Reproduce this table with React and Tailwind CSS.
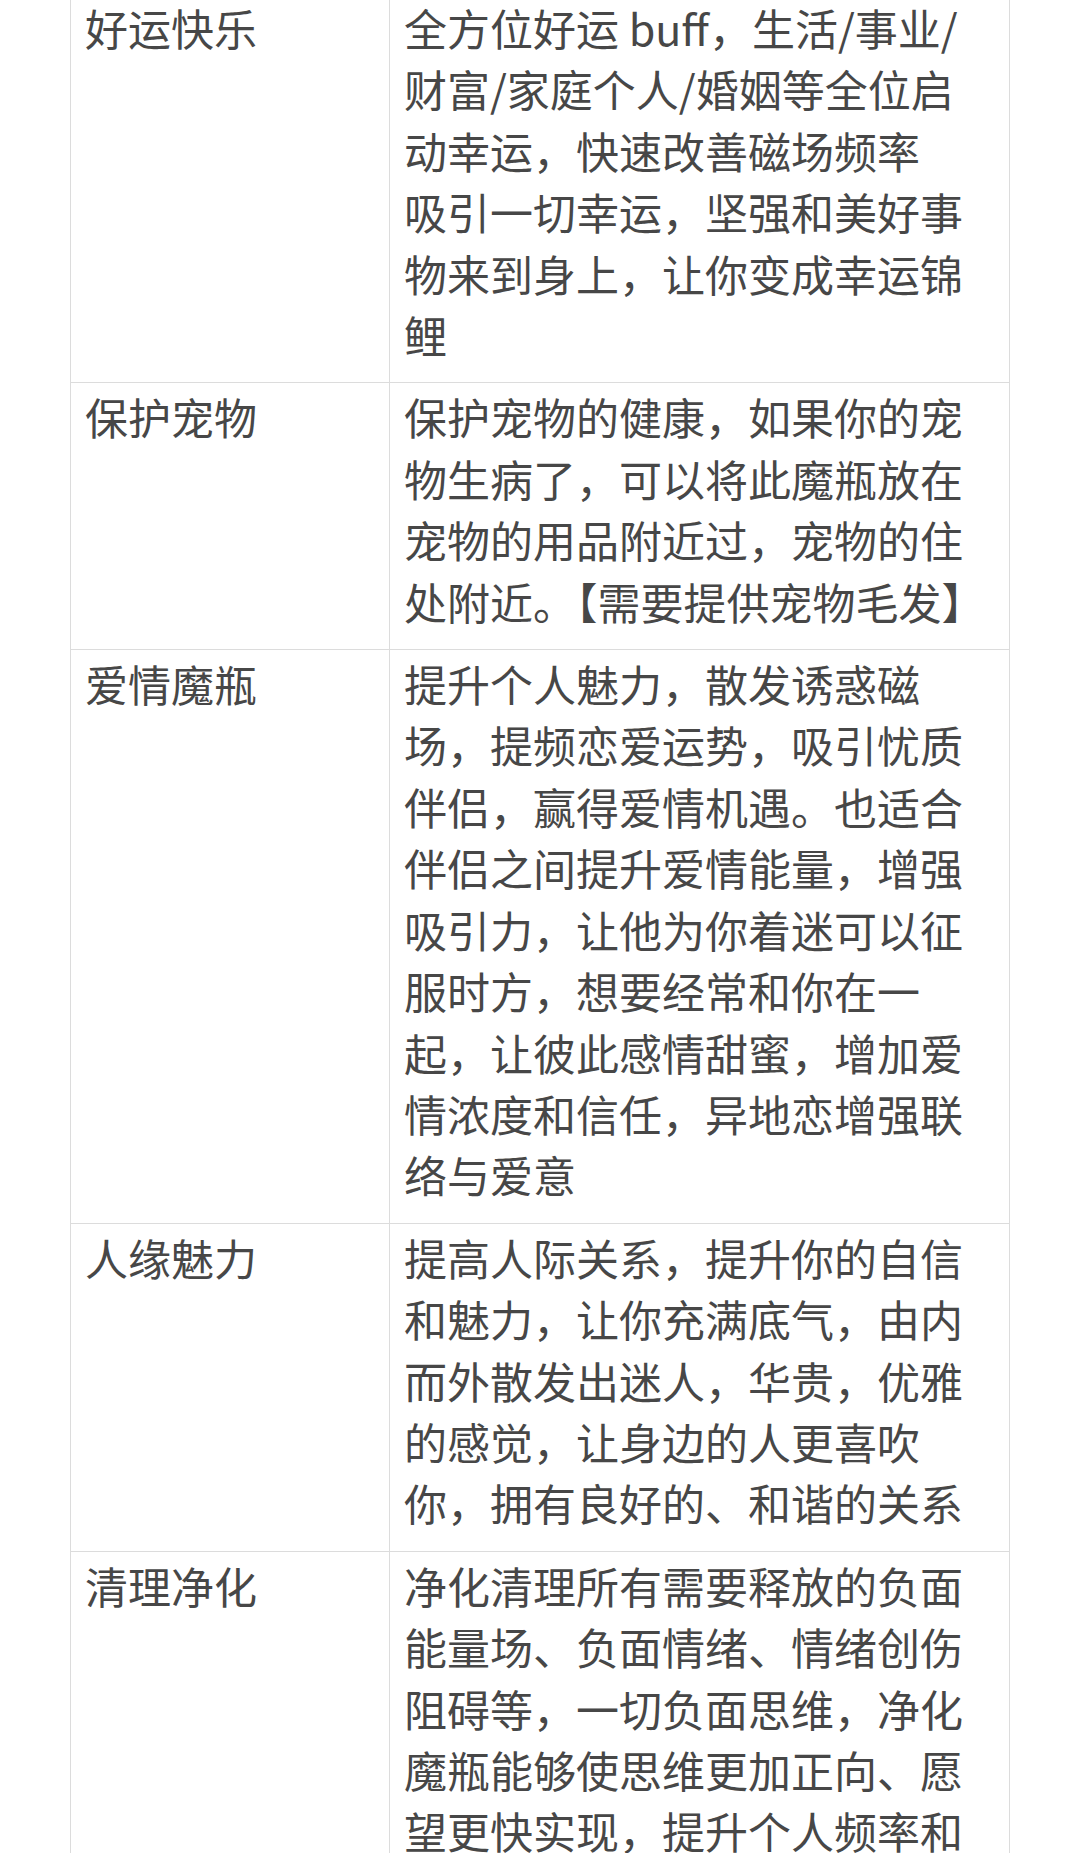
import React from 'react'

const rows = [
  {
    name: '好运快乐',
    lines: [
      '全方位好运 buff，生活/事业/',
      '财富/家庭个人/婚姻等全位启',
      '动幸运，快速改善磁场频率',
      '吸引一切幸运，坚强和美好事',
      '物来到身上，让你变成幸运锦',
      '鲤',
    ],
  },
  {
    name: '保护宠物',
    lines: [
      '保护宠物的健康，如果你的宠',
      '物生病了，可以将此魔瓶放在',
      '宠物的用品附近过，宠物的住',
      '处附近。【需要提供宠物毛发】',
    ],
  },
  {
    name: '爱情魔瓶',
    lines: [
      '提升个人魅力，散发诱惑磁',
      '场，提频恋爱运势，吸引忧质',
      '伴侣，赢得爱情机遇。也适合',
      '伴侣之间提升爱情能量，增强',
      '吸引力，让他为你着迷可以征',
      '服时方，想要经常和你在一',
      '起，让彼此感情甜蜜，增加爱',
      '情浓度和信任，异地恋增强联',
      '络与爱意',
    ],
  },
  {
    name: '人缘魅力',
    lines: [
      '提高人际关系，提升你的自信',
      '和魅力，让你充满底气，由内',
      '而外散发出迷人，华贵，优雅',
      '的感觉，让身边的人更喜吹',
      '你，拥有良好的、和谐的关系',
    ],
  },
  {
    name: '清理净化',
    lines: [
      '净化清理所有需要释放的负面',
      '能量场、负面情绪、情绪创伤',
      '阻碍等，一切负面思维，净化',
      '魔瓶能够使思维更加正向、愿',
      '望更快实现，提升个人频率和',
    ],
  },
]

function App() {
  return (
    <div className='w-[1080px] h-[1853px] overflow-hidden bg-white' style={{ fontFamily: '"Noto Sans CJK SC", "Noto Sans", sans-serif' }}>
      <table className='mx-auto -mt-[7px] w-[940px] table-fixed border-collapse text-[43px] leading-[61.4px] text-[#474747]'>
        <colgroup>
          <col className='w-[319px]' />
          <col />
        </colgroup>
        <tbody>
          {rows.map((row) => (
            <tr key={row.name}>
              <td className='border border-[#dcdcdc] px-[14px] pt-[3px] pb-[17px] align-top whitespace-nowrap'>{row.name}</td>
              <td className='border border-[#dcdcdc] px-[14px] pt-[3px] pb-[17px] align-top'>
                {row.lines.map((line, i) => (
                  <div key={i} className='whitespace-nowrap'>{line}</div>
                ))}
              </td>
            </tr>
          ))}
        </tbody>
      </table>
    </div>
  )
}

export default App
